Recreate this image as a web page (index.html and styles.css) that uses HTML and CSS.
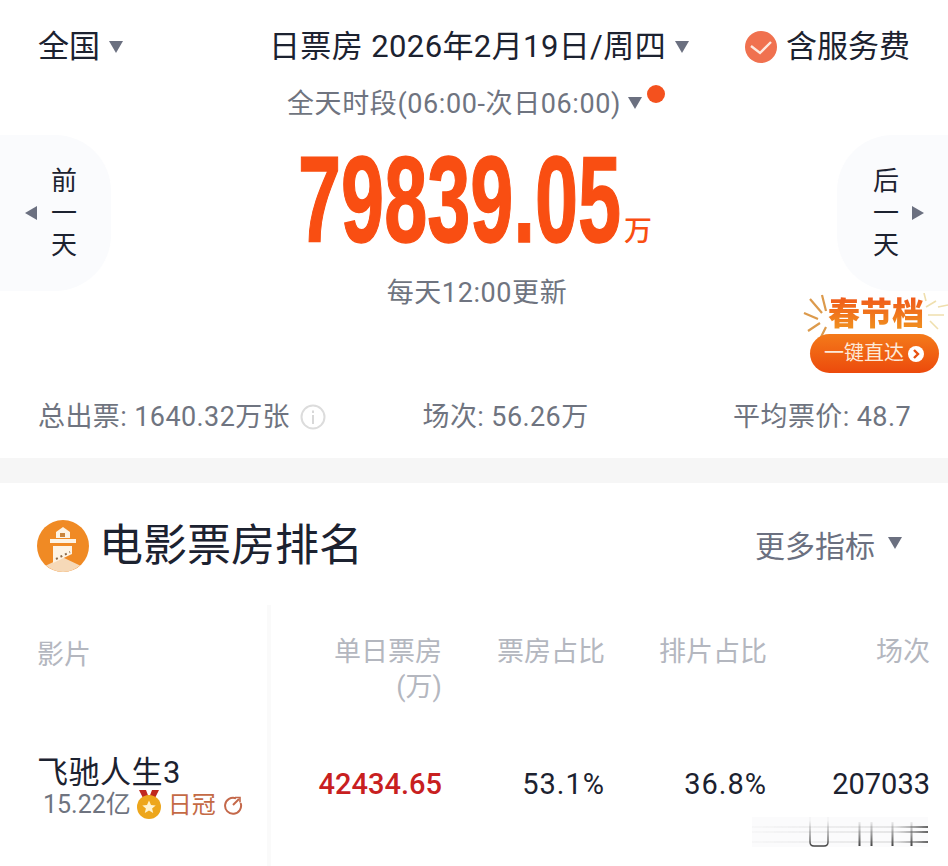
FILE: index.html
```html
<!DOCTYPE html>
<html lang="zh">
<head>
<meta charset="utf-8">
<title>日票房</title>
<link rel="stylesheet" href="styles.css">
</head>
<body>
<main class="page">
  <section class="summary">
    <div class="top">
      <div class="top-item"><span>全国</span><i class="tri tri-down"></i></div>
      <div class="top-item date"><span>日票房 2026年2月19日/周四</span><i class="tri tri-down"></i></div>
      <div class="top-item fee">
        <svg class="check" viewBox="0 0 32 32"><circle cx="16" cy="16" r="16" fill="#f0714f"/><path d="M6 15l9 7 11-11" fill="none" stroke="#fde9df" stroke-width="2.4"/></svg>
        <span>含服务费</span>
      </div>
    </div>
    <div class="period"><span>全天时段(06:00-次日06:00)</span><i class="tri tri-down small"></i><b class="dot"></b></div>
    <div class="hero">
      <div class="day day-prev"><i class="tri tri-left"></i><span class="day-text">前<br>一<br>天</span></div>
      <div class="total"><strong class="amount">79839.05</strong><span class="unit">万</span></div>
      <div class="day day-next"><span class="day-text">后<br>一<br>天</span><i class="tri tri-right"></i></div>
      <div class="promo">
        <svg class="spark" viewBox="0 0 146 50"><g stroke="#dc9a4c" stroke-width="2.2" fill="none"><path d="M2 20l14 6M8 6l12 14M18 30L6 38M20 2l4 16M24 34l-6 12"/></g><g stroke="#efdfae" stroke-width="1.6" fill="none"><path d="M124 14l10-6M126 22h16M124 8l-2-8M128 28l8 8M136 14l10-2"/></g></svg>
        <div class="promo-title">春节档</div>
        <div class="promo-btn"><span>一键直达</span><svg class="go" viewBox="0 0 16 16"><circle cx="8" cy="8" r="8" fill="#fff"/><path d="M6 4l4 4-4 4" fill="none" stroke="#e8500f" stroke-width="2.4"/></svg></div>
      </div>
    </div>
    <div class="note">每天12:00更新</div>
    <div class="stats">
      <div class="stat">总出票: 1640.32万张<svg class="info" viewBox="0 0 26 26"><circle cx="13" cy="13" r="11.5" fill="none" stroke="#dcdcdc" stroke-width="2"/><path d="M13 11v9M13 6.500v2.500" stroke="#d8d8d8" stroke-width="2"/></svg></div>
      <div class="stat stat-mid">场次: 56.26万</div>
      <div class="stat">平均票价: 48.7</div>
    </div>
  </section>
  <div class="gap"></div>
  <section class="ranking">
    <div class="rank-head">
      <div class="rank-title">
        <svg class="logo" viewBox="0 0 52 52">
          <circle cx="26" cy="26" r="26" fill="#f08a24"/>
          <path d="M9 45.600l17-8 17 8a26 26 0 0 1-34 0z" fill="#f6d9b8"/>
          <path d="M19 12l7-5 7 5v6h-14z" fill="#fdf3e4"/>
          <rect x="13" y="19" width="26" height="4" fill="#fdf3e4"/>
          <path d="M16 26h19v8l-19 9z" fill="#fdf3e4"/>
          <path d="M19 39l14-7" stroke="#8a6a4a" stroke-width="2" stroke-dasharray="2 3"/>
          <rect x="23" y="13" width="5" height="4" fill="#c9853d"/>
        </svg>
        <h2>电影票房排名</h2>
      </div>
      <div class="more"><span>更多指标</span><i class="tri tri-down"></i></div>
    </div>
    <div class="table">
      <div class="film-col">
        <div class="th film-th">影片</div>
        <div class="film">
          <div class="film-name">飞驰人生3</div>
          <div class="film-sub">
            <span class="sum">15.22亿</span>
            <svg class="medal" viewBox="0 0 26 30"><path d="M3 0h7l3 8 3-8h7l-6 12H9z" fill="#c0281f"/><circle cx="13" cy="17" r="12" fill="#eda61c"/><path d="M13 10.500l2 4.500 4.700.400-3.600 3 1.100 4.600-4.200-2.500-4.200 2.500 1.100-4.600-3.600-3 4.700-.400z" fill="#fff3d0"/></svg>
            <span class="crown">日冠</span>
            <svg class="replay" viewBox="0 0 20 20"><path d="M13 3.300A8 8 0 1 0 17.600 8" fill="none" stroke="#c4684a" stroke-width="2"/><path d="M10 10l6-6" stroke="#c4684a" stroke-width="2"/><path d="M12 2.500h5v5" fill="none" stroke="#c4684a" stroke-width="1.600"/></svg>
          </div>
        </div>
      </div>
      <div class="data">
        <div class="th">单日票房<br>(万)</div>
        <div class="th">票房占比</div>
        <div class="th">排片占比</div>
        <div class="th">场次</div>
        <div class="td td-red">42434.65</div>
        <div class="td td-pct">53.1%</div>
        <div class="td td-pct">36.8%</div>
        <div class="td">207033</div>
      </div>
    </div>
  </section>
  <svg class="watermark" viewBox="0 0 176 36" aria-hidden="true">
    <defs>
      <filter id="soft"><feGaussianBlur stdDeviation="0.7"/></filter>
      <linearGradient id="fadeV" gradientUnits="userSpaceOnUse" x1="0" y1="4" x2="0" y2="30"><stop offset="0" stop-color="#666" stop-opacity="0.05"/><stop offset="1" stop-color="#444"/></linearGradient>
      <linearGradient id="fadeH" gradientUnits="userSpaceOnUse" x1="0" y1="0" x2="176" y2="0"><stop offset="0" stop-color="#888" stop-opacity="0.05"/><stop offset="0.8" stop-color="#888" stop-opacity="0.25"/><stop offset="1" stop-color="#333"/></linearGradient>
    </defs>
    <rect x="0" y="1" width="176" height="30" fill="#fbfbfc"/>
    <g filter="url(#soft)" fill="none">
      <path d="M0 11.100h176M0 16h176M0 26h176" stroke="url(#fadeH)" stroke-width="1.500"/>
      <path d="M58 1v25q0 4 4 4h10q4 0 4-4V1" stroke="url(#fadeV)" stroke-width="1.500"/>
      <path d="M107.500 6v24M119.500 6v24M140.500 6v24M159.500 6v24" stroke="url(#fadeV)" stroke-width="2"/>
    </g>
  </svg>
</main>
</body>
</html>
```
FILE: styles.css
```css
* { box-sizing: border-box; }
html, body { margin: 0; padding: 0; background: #fff; }
body {
  width: 948px;
  height: 866px;
  overflow: hidden;
  font-family: Roboto, "Noto Sans CJK SC", sans-serif;
  color: #1c2230;
}
.page { position: relative; width: 948px; height: 866px; overflow: hidden; }

.tri { display: block; width: 0; height: 0; flex: none; }
.tri-down { border-left: 7px solid transparent; border-right: 7px solid transparent; border-top: 12px solid #6b7080; }
.tri-left { border-top: 7px solid transparent; border-bottom: 7px solid transparent; border-right: 12px solid #6b7080; }
.tri-right { border-top: 7px solid transparent; border-bottom: 7px solid transparent; border-left: 12px solid #6b7080; }

.summary { height: 458px; display: flex; flex-direction: column; }
.top {
  display: flex;
  justify-content: space-between;
  align-items: center;
  height: 44px;
  margin-top: 25px;
  padding: 0 38px;
  font-size: 31px;
  line-height: 44px;
}
.top-item { display: flex; align-items: center; white-space: nowrap; }
.top-item > span + .tri { margin-left: 9px; }
.date { margin-left: 90px; letter-spacing: 0.4px; }
.fee { gap: 9px; }
.check { width: 32px; height: 32px; flex: none; }

.period {
  display: flex;
  justify-content: center;
  align-items: center;
  height: 40px;
  margin-top: 12px;
  padding-left: 4px;
  font-size: 27px;
  letter-spacing: 0.6px;
  color: #6f7480;
  position: relative;
}
.period .tri { margin: 4px 0 0 7px; }
.dot { width: 18px; height: 18px; border-radius: 50%; background: #f4511e; margin: -14px 0 0 5px; }

.hero {
  position: relative;
  display: flex;
  justify-content: space-between;
  height: 156px;
  margin-top: 14px;
}
.day {
  width: 111px;
  display: flex;
  align-items: center;
  background: #fafbfd;
  font-size: 26px;
  line-height: 32px;
  color: #1c2230;
}
.day-prev { border-radius: 0 56px 56px 0; padding-left: 25px; gap: 14px; }
.day-next { border-radius: 56px 0 0 56px; padding-left: 36px; gap: 13px; }
.day-text { display: block; text-align: center; }
.total {
  position: absolute;
  left: 298px;
  top: 15px;
  display: flex;
  align-items: flex-end;
  white-space: nowrap;
}
.amount {
  display: block;
  width: 323px;
  font-family: "Liberation Sans", sans-serif;
  font-size: 122px;
  line-height: 100px;
  font-weight: 700;
  color: #f94e12;
  -webkit-text-stroke: 1.5px #f94e12;
  transform: scaleX(0.635);
  transform-origin: left center;
}
.unit { font-size: 28px; line-height: 30px; font-weight: 500; color: #f94e12; margin: 0 0 3px 3px; }
.promo { position: absolute; right: 0; top: 158px; width: 146px; height: 82px; }
.spark { position: absolute; left: 0; top: 0; width: 146px; height: 50px; }
.promo-title {
  position: absolute;
  left: 26px;
  top: 3px;
  font-size: 32px;
  line-height: 36px;
  font-weight: 900;
  background: linear-gradient(180deg, #f0581a, #f0951f);
  -webkit-background-clip: text;
  background-clip: text;
  color: transparent;
}
.promo-btn {
  position: absolute;
  left: 8px;
  top: 41px;
  width: 129px;
  height: 39px;
  border-radius: 20px;
  background: linear-gradient(180deg, #f47a1a, #ec4a0c);
  color: #fde9d8;
  font-size: 20px;
  line-height: 39px;
  padding-left: 14px;
  display: flex;
  align-items: center;
  gap: 4px;
}
.go { width: 16px; height: 16px; flex: none; }

.note { margin-top: -18px; padding-left: 6px; height: 40px; text-align: center; font-size: 27px; letter-spacing: 0.6px; line-height: 40px; color: #6f7480; }

.stats {
  display: flex;
  justify-content: space-between;
  margin-top: 84px;
  padding: 0 37px 0 38px;
  font-size: 27px;
  letter-spacing: 0.4px;
  line-height: 40px;
  color: #6f7480;
}
.stat { display: flex; align-items: center; white-space: nowrap; }
.stat-mid { margin-right: 48px; }
.info { width: 26px; height: 26px; margin-left: 10px; }

.gap { height: 25px; background: #f6f6f6; }

.ranking { height: 383px; }
.rank-head {
  display: flex;
  justify-content: space-between;
  align-items: center;
  height: 52px;
  margin-top: 37px;
  padding: 0 46px 0 37px;
}
.rank-title { display: flex; align-items: center; gap: 10px; }
.logo { width: 52px; height: 52px; flex: none; }
h2 { margin: 0; font-size: 44px; line-height: 52px; font-weight: 400; }
.more { display: flex; align-items: center; gap: 13px; font-size: 30px; color: #6b7080; padding-bottom: 4px; }
.more .tri { margin-top: -2px; }

.table { display: flex; margin-top: 33px; height: 261px; }
.film-col { width: 271px; padding: 33px 0 0 37px; border-right: 4px solid #fafafa; }
.th { font-size: 27px; line-height: 35px; color: #b4b7bf; }
.film-th { height: 116px; }
.film-name { font-size: 31px; line-height: 38px; letter-spacing: 0.5px; }
.film-sub { display: flex; align-items: center; height: 30px; padding-left: 6px; font-size: 25px; line-height: 30px; margin-top: -2px; }
.sum { color: #6f7480; }
.medal { width: 26px; height: 30px; margin-left: 5px; flex: none; }
.crown { color: #c46a45; margin-left: 6px; font-size: 24px; }
.replay { width: 20px; height: 20px; margin-left: 7px; }
.data {
  flex: 1;
  display: grid;
  grid-template-columns: 171px 163px 162px 163px;
  grid-template-rows: 130px 38px;
  padding-top: 30px;
  text-align: right;
}
.td { font-size: 29px; line-height: 38px; }
.td-red { color: #c8201f; font-weight: 500; }
.td-pct { letter-spacing: 1px; }

.watermark { position: absolute; left: 752px; top: 816px; width: 176px; height: 36px; }
```
